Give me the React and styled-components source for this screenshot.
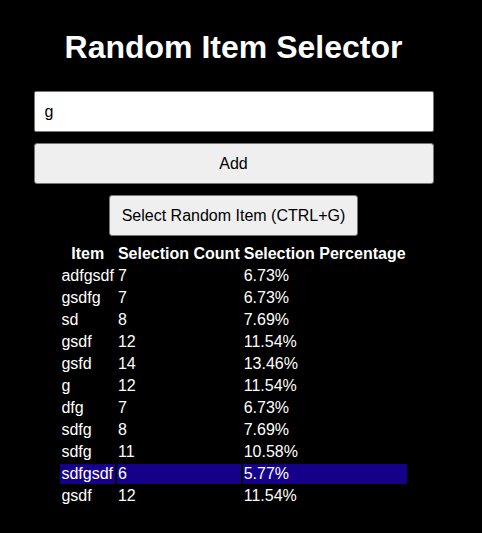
import React, { useEffect, useState } from "react";
import styled, { createGlobalStyle } from "styled-components";

const initialItems = [
  { name: "adfgsdf", count: 7 },
  { name: "gsdfg", count: 7 },
  { name: "sd", count: 8 },
  { name: "gsdf", count: 12 },
  { name: "gsfd", count: 14 },
  { name: "g", count: 12 },
  { name: "dfg", count: 7 },
  { name: "sdfg", count: 8 },
  { name: "sdfg", count: 11 },
  { name: "sdfgsdf", count: 6 },
  { name: "gsdf", count: 12 },
];

const GlobalStyle = createGlobalStyle`
  body {
    margin: 0;
    background: #000;
    color: #fff;
    font-family: "Liberation Sans", Arial, sans-serif;
  }
`;

export default function App() {
  const [items, setItems] = useState(initialItems);
  const [text, setText] = useState("g");
  const [selected, setSelected] = useState(9);

  const total = items.reduce((sum, item) => sum + item.count, 0);

  const addItem = () => {
    if (!text.trim()) return;
    setItems([...items, { name: text.trim(), count: 0 }]);
    setText("");
  };

  const pickRandom = () => {
    if (!items.length) return;
    const index = Math.floor(Math.random() * items.length);
    setSelected(index);
    setItems((prev) =>
      prev.map((item, i) => (i === index ? { ...item, count: item.count + 1 } : item))
    );
  };

  useEffect(() => {
    const onKey = (e) => {
      if (e.ctrlKey && e.key.toLowerCase() === "g") {
        e.preventDefault();
        pickRandom();
      }
    };
    window.addEventListener("keydown", onKey);
    return () => window.removeEventListener("keydown", onKey);
  });

  return (
    <Page>
      <GlobalStyle />
      <Title>Random Item Selector</Title>
      <Controls>
        <ItemInput
          value={text}
          onChange={(e) => setText(e.target.value)}
          onKeyDown={(e) => e.key === "Enter" && addItem()}
        />
        <Button $wide onClick={addItem}>
          Add
        </Button>
        <Button onClick={pickRandom}>Select Random Item (CTRL+G)</Button>
      </Controls>
      <Table>
        <thead>
          <tr>
            <Th>Item</Th>
            <Th>Selection Count</Th>
            <Th>Selection Percentage</Th>
          </tr>
        </thead>
        <tbody>
          {items.map((item, i) => (
            <Row key={i} $active={i === selected}>
              <Td>{item.name}</Td>
              <Td>{item.count}</Td>
              <Td>{total ? ((item.count / total) * 100).toFixed(2) : "0.00"}%</Td>
            </Row>
          ))}
        </tbody>
      </Table>
    </Page>
  );
}

const Page = styled.div`
  width: 467px;
  padding: 8px 0;
  box-sizing: border-box;
  display: flex;
  flex-direction: column;
  align-items: center;
`;

const Title = styled.h1`
  font-size: 32px;
  font-weight: bold;
  line-height: 37px;
  margin: 21px 0 25px;
`;

const Controls = styled.div`
  display: flex;
  flex-direction: column;
  align-items: center;
  gap: 11px;
`;

const ItemInput = styled.input`
  width: 400px;
  height: 41px;
  box-sizing: border-box;
  padding: 10px;
  border: 1px solid #767676;
  border-radius: 2px;
  background: #fff;
  color: #000;
  font-family: "Liberation Sans", Arial, sans-serif;
  font-size: 16px;
  outline: none;
`;

const Button = styled.button`
  width: ${({ $wide }) => ($wide ? "400px" : "auto")};
  height: 41px;
  box-sizing: border-box;
  padding: 10px 11.5px;
  border: 1px solid #767676;
  border-radius: 3px;
  background: #efefef;
  color: #000;
  font-family: "Liberation Sans", Arial, sans-serif;
  font-size: 16px;
  cursor: pointer;
`;

const Table = styled.table`
  margin-top: 6px;
  border-spacing: 2px;
  font-size: 16px;
`;

const Th = styled.th`
  padding: 1px;
  font-weight: bold;
  text-align: center;
`;

const Row = styled.tr`
  background: ${({ $active }) => ($active ? "#150089" : "transparent")};
`;

const Td = styled.td`
  padding: 1px;
  text-align: left;
`;
